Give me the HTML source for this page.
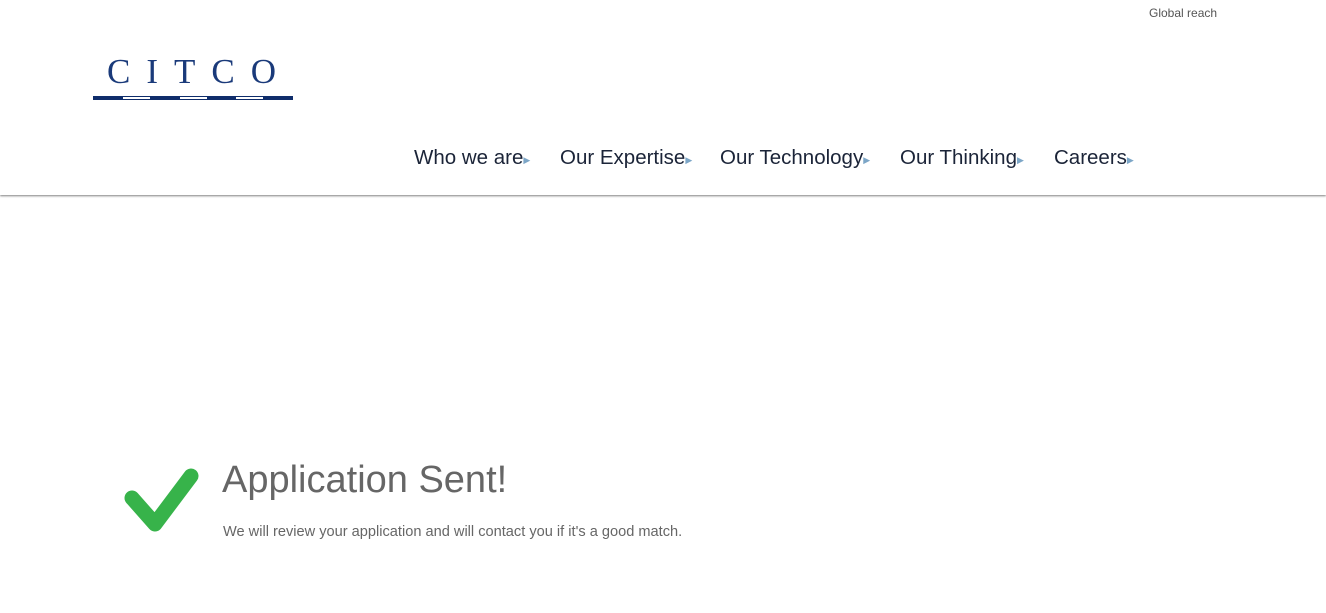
<!DOCTYPE html>
<html><head><meta charset="utf-8"><style>
body{margin:0;width:1326px;height:613px;background:#fff;font-family:"Liberation Sans",sans-serif;position:relative;overflow:hidden}
.hdr{position:absolute;left:0;top:0;width:1326px;height:195px;background:#fff;box-shadow:0 1px 2px rgba(0,0,0,.5)}
.gr{position:absolute;left:1149px;top:6px;font-size:12px;color:#555}
.logo{position:absolute;left:93px;top:53px;width:200px}
.logo .t{font-family:"Liberation Serif",serif;color:#1a3a7a;font-size:35px;letter-spacing:16px;line-height:38px;padding-left:14px}
.logo .bar{height:4px;background:#0f2d6b;margin-top:5px;position:relative}
.logo .bar i{position:absolute;top:1px;height:2px;width:27px;background:#fff}
.nav{position:absolute;top:146px;font-size:20.5px;color:#1b2438;white-space:nowrap}
.nav span{position:absolute}
.nav b{font-weight:normal;color:#7ca6c7;font-size:9px;vertical-align:1px}
h1{position:absolute;left:222px;top:459px;margin:0;font-weight:normal;font-size:38px;color:#666}
p{position:absolute;left:223px;top:524px;margin:0;font-size:14.6px;color:#666}
</style></head><body>
<div class="hdr">
<div class="gr">Global reach</div>
<div class="logo"><div class="t">CITCO</div><div class="bar"><i style="left:30px"></i><i style="left:87px"></i><i style="left:143px"></i></div></div>
<div class="nav">
<span style="left:414px">Who we are<b>▶</b></span>
<span style="left:560px">Our Expertise<b>▶</b></span>
<span style="left:720px">Our Technology<b>▶</b></span>
<span style="left:900px">Our Thinking<b>▶</b></span>
<span style="left:1054px">Careers<b>▶</b></span>
</div>
</div>
<svg style="position:absolute;left:120px;top:462px" width="82" height="78"><path d="M12 36 L35 62 L71 14" fill="none" stroke="#37b34a" stroke-width="15" stroke-linejoin="round" stroke-linecap="round"/></svg>
<h1>Application Sent!</h1>
<p>We will review your application and will contact you if it's a good match.</p>
</body></html>
